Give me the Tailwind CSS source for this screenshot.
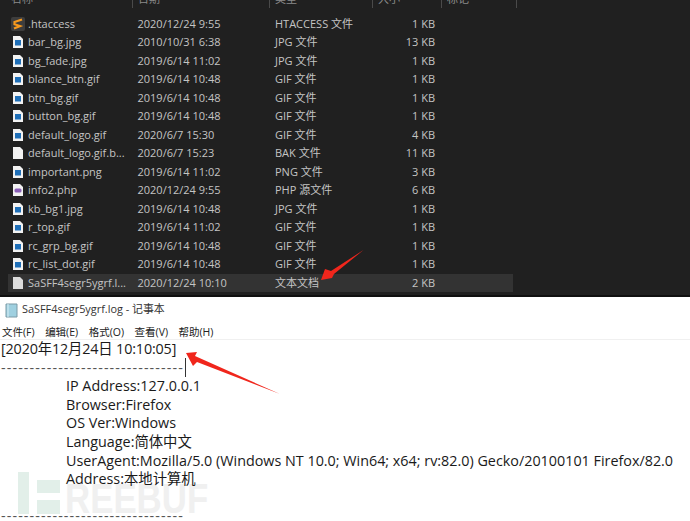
<!DOCTYPE html>
<html lang="zh"><head><meta charset="utf-8"><script src="https://cdn.jsdelivr.net/npm/@tailwindcss/browser@4"></script></head>
<body class="m-0 bg-white">
<div class="relative w-[690px] h-[521px] overflow-hidden bg-white font-['Open_Sans','Noto_Sans_CJK_SC',sans-serif]">
  <!-- Explorer -->
  <section class="h-[297px] bg-[#202020] border-b-2 border-[#101010] text-[11px] text-[#c4c4c4]">
    <div class="h-[8px] relative overflow-hidden text-[#8a8a8a] flex">
      <div class="w-[133px] pl-[11px] -mt-[9px] border-r border-[#4a4a4a]">名称</div>
      <div class="w-[137px] pl-[5px] -mt-[9px] border-r border-[#4a4a4a]">日期</div>
      <div class="w-[103px] pl-[5px] -mt-[9px] border-r border-[#4a4a4a]">类型</div>
      <div class="w-[69px] pl-[5px] -mt-[9px] border-r border-[#4a4a4a]">大小</div>
      <div class="w-[75px] pl-[5px] -mt-[9px] border-r border-[#4a4a4a]">标记</div>
    </div>
    <div class="pt-[6.5px] pl-[8px] w-[513px] leading-[18.5px]">
      <div class="flex h-[18.5px] items-center"><span class="w-[20px] flex justify-center"><svg width="14" height="14" viewBox="0 0 14 14"><rect width="14" height="14" rx="2" fill="#3d3d3d"/><path d="M11 2.5 3.5 5v2.2L9 9 3 11.5" fill="none" stroke="#f79a1e" stroke-width="2.2"/></svg></span><span class="w-[109.5px]">.htaccess</span><span class="w-[137.5px]">2020/12/24 9:55</span><span class="w-[100px]">HTACCESS 文件</span><span class="w-[60px] text-right">1 KB</span></div>
      <div class="flex h-[18.5px] items-center"><span class="w-[20px] flex justify-center"><svg width="10" height="12" viewBox="0 0 10 12"><path d="M0 0h7l3 3v9H0z" fill="#f2f2f2"/><rect x="2" y="4" width="6" height="5.5" fill="#1f6fb8"/></svg></span><span class="w-[109.5px]">bar_bg.jpg</span><span class="w-[137.5px]">2010/10/31 6:38</span><span class="w-[100px]">JPG 文件</span><span class="w-[60px] text-right">13 KB</span></div>
      <div class="flex h-[18.5px] items-center"><span class="w-[20px] flex justify-center"><svg width="10" height="12" viewBox="0 0 10 12"><path d="M0 0h7l3 3v9H0z" fill="#f2f2f2"/><rect x="2" y="4" width="6" height="5.5" fill="#1f6fb8"/></svg></span><span class="w-[109.5px]">bg_fade.jpg</span><span class="w-[137.5px]">2019/6/14 11:02</span><span class="w-[100px]">JPG 文件</span><span class="w-[60px] text-right">1 KB</span></div>
      <div class="flex h-[18.5px] items-center"><span class="w-[20px] flex justify-center"><svg width="10" height="12" viewBox="0 0 10 12"><path d="M0 0h7l3 3v9H0z" fill="#f2f2f2"/><rect x="2" y="4" width="6" height="5.5" fill="#1f6fb8"/></svg></span><span class="w-[109.5px]">blance_btn.gif</span><span class="w-[137.5px]">2019/6/14 10:48</span><span class="w-[100px]">GIF 文件</span><span class="w-[60px] text-right">1 KB</span></div>
      <div class="flex h-[18.5px] items-center"><span class="w-[20px] flex justify-center"><svg width="10" height="12" viewBox="0 0 10 12"><path d="M0 0h7l3 3v9H0z" fill="#f2f2f2"/><rect x="2" y="4" width="6" height="5.5" fill="#1f6fb8"/></svg></span><span class="w-[109.5px]">btn_bg.gif</span><span class="w-[137.5px]">2019/6/14 10:48</span><span class="w-[100px]">GIF 文件</span><span class="w-[60px] text-right">1 KB</span></div>
      <div class="flex h-[18.5px] items-center"><span class="w-[20px] flex justify-center"><svg width="10" height="12" viewBox="0 0 10 12"><path d="M0 0h7l3 3v9H0z" fill="#f2f2f2"/><rect x="2" y="4" width="6" height="5.5" fill="#1f6fb8"/></svg></span><span class="w-[109.5px]">button_bg.gif</span><span class="w-[137.5px]">2019/6/14 10:48</span><span class="w-[100px]">GIF 文件</span><span class="w-[60px] text-right">1 KB</span></div>
      <div class="flex h-[18.5px] items-center"><span class="w-[20px] flex justify-center"><svg width="10" height="12" viewBox="0 0 10 12"><path d="M0 0h7l3 3v9H0z" fill="#f2f2f2"/><rect x="2" y="4" width="6" height="5.5" fill="#1f6fb8"/></svg></span><span class="w-[109.5px]">default_logo.gif</span><span class="w-[137.5px]">2020/6/7 15:30</span><span class="w-[100px]">GIF 文件</span><span class="w-[60px] text-right">4 KB</span></div>
      <div class="flex h-[18.5px] items-center"><span class="w-[20px] flex justify-center"><svg width="10" height="12" viewBox="0 0 10 12"><path d="M0 0h7l3 3v9H0z" fill="#f2f2f2"/></svg></span><span class="w-[109.5px]">default_logo.gif.b...</span><span class="w-[137.5px]">2020/6/7 15:23</span><span class="w-[100px]">BAK 文件</span><span class="w-[60px] text-right">11 KB</span></div>
      <div class="flex h-[18.5px] items-center"><span class="w-[20px] flex justify-center"><svg width="10" height="12" viewBox="0 0 10 12"><path d="M0 0h7l3 3v9H0z" fill="#f2f2f2"/><rect x="2" y="4" width="6" height="5.5" fill="#1f6fb8"/></svg></span><span class="w-[109.5px]">important.png</span><span class="w-[137.5px]">2019/6/14 11:02</span><span class="w-[100px]">PNG 文件</span><span class="w-[60px] text-right">3 KB</span></div>
      <div class="flex h-[18.5px] items-center"><span class="w-[20px] flex justify-center"><svg width="10" height="12" viewBox="0 0 10 12"><path d="M0 0h7l3 3v9H0z" fill="#f2f2f2"/><rect x="1.5" y="4.5" width="7" height="4" rx="1.5" fill="#8a5fb8"/></svg></span><span class="w-[109.5px]">info2.php</span><span class="w-[137.5px]">2020/12/24 9:55</span><span class="w-[100px]">PHP 源文件</span><span class="w-[60px] text-right">6 KB</span></div>
      <div class="flex h-[18.5px] items-center"><span class="w-[20px] flex justify-center"><svg width="10" height="12" viewBox="0 0 10 12"><path d="M0 0h7l3 3v9H0z" fill="#f2f2f2"/><rect x="2" y="4" width="6" height="5.5" fill="#1f6fb8"/></svg></span><span class="w-[109.5px]">kb_bg1.jpg</span><span class="w-[137.5px]">2019/6/14 10:48</span><span class="w-[100px]">JPG 文件</span><span class="w-[60px] text-right">1 KB</span></div>
      <div class="flex h-[18.5px] items-center"><span class="w-[20px] flex justify-center"><svg width="10" height="12" viewBox="0 0 10 12"><path d="M0 0h7l3 3v9H0z" fill="#f2f2f2"/><rect x="2" y="4" width="6" height="5.5" fill="#1f6fb8"/></svg></span><span class="w-[109.5px]">r_top.gif</span><span class="w-[137.5px]">2019/6/14 11:02</span><span class="w-[100px]">GIF 文件</span><span class="w-[60px] text-right">1 KB</span></div>
      <div class="flex h-[18.5px] items-center"><span class="w-[20px] flex justify-center"><svg width="10" height="12" viewBox="0 0 10 12"><path d="M0 0h7l3 3v9H0z" fill="#f2f2f2"/><rect x="2" y="4" width="6" height="5.5" fill="#1f6fb8"/></svg></span><span class="w-[109.5px]">rc_grp_bg.gif</span><span class="w-[137.5px]">2019/6/14 10:48</span><span class="w-[100px]">GIF 文件</span><span class="w-[60px] text-right">1 KB</span></div>
      <div class="flex h-[18.5px] items-center"><span class="w-[20px] flex justify-center"><svg width="10" height="12" viewBox="0 0 10 12"><path d="M0 0h7l3 3v9H0z" fill="#f2f2f2"/><rect x="2" y="4" width="6" height="5.5" fill="#1f6fb8"/></svg></span><span class="w-[109.5px]">rc_list_dot.gif</span><span class="w-[137.5px]">2019/6/14 10:48</span><span class="w-[100px]">GIF 文件</span><span class="w-[60px] text-right">1 KB</span></div>
      <div class="flex h-[18.5px] items-center bg-[#333333]"><span class="w-[20px] flex justify-center"><svg width="10" height="12" viewBox="0 0 10 12"><path d="M0 0h7l3 3v9H0z" fill="#dcdcdc"/></svg></span><span class="w-[109.5px]">SaSFF4segr5ygrf.l...</span><span class="w-[137.5px]">2020/12/24 10:10</span><span class="w-[100px]">文本文档</span><span class="w-[60px] text-right">2 KB</span></div>
    </div>
  </section>
  <!-- watermark -->
  <div class="absolute left-[18px] top-[472px] w-[11px] h-[42px] bg-[#e2efe9]"></div>
  <div class="absolute left-[37px] top-[480px] w-[23px] h-[13px] bg-[#e2efe9]"></div>
  <div class="absolute left-[37px] top-[500px] w-[23px] h-[14px] bg-[#e2efe9]"></div>
  <div class="absolute left-[65px] top-[473px] text-[43px] leading-[50px] font-bold text-[#f0f0f0] font-['Liberation_Sans',sans-serif] scale-x-[0.81] origin-left">REEBUF</div>
  <!-- Notepad -->
  <section class="relative text-[#1a1a1a]">
    <div class="h-[27px] flex items-center pl-[5px] gap-[4px] text-[10.9px] text-[#333]"><svg width="13" height="15" viewBox="0 0 13 15"><path d="M1 1h11v13H1z" fill="#9fd0e0" stroke="#7a9aa6"/><path d="M3 1v13" stroke="#d8eef5"/></svg><span class="-translate-y-[1px]">SaSFF4segr5ygrf.log - 记事本</span></div>
    <div class="h-[15px] mt-[1px] flex items-center pl-[2px] gap-[10.5px] text-[10.5px] text-[#222]"><span>文件(F)</span><span>编辑(E)</span><span>格式(O)</span><span>查看(V)</span><span>帮助(H)</span></div>
    <div class="h-[1px] mt-[-1px] bg-[#f0f0f0]"></div>
    <div class="pl-[1px] text-[14.35px] leading-[18.6px] whitespace-nowrap">
      <div class="tracking-[-0.15px]">[2020年12月24日 10:10:05]</div>
      <div class="text-[#555] tracking-[1.1px]">--------------------------------</div>
      <div class="pl-[65px]">IP Address:127.0.0.1</div>
      <div class="pl-[65px]">Browser:Firefox</div>
      <div class="pl-[65px]">OS Ver:Windows</div>
      <div class="pl-[65px]">Language:简体中文</div>
      <div class="pl-[65px]">UserAgent:Mozilla/5.0 (Windows NT 10.0; Win64; x64; rv:82.0) Gecko/20100101 Firefox/82.0</div>
      <div class="pl-[65px]">Address:本地计算机</div>
      <div class="h-[18.6px]"></div>
      <div class="text-[#555] tracking-[1.1px]">--------------------------------</div>
    </div>
  </section>
  <!-- caret -->
  <div class="absolute left-[185px] top-[358px] w-[1px] h-[19px] bg-[#333]"></div>
  <!-- arrows -->
  <svg class="absolute left-0 top-0 pointer-events-none" width="690" height="521" viewBox="0 0 690 521">
    <polygon points="363.5,250 334,274 332,278 321,280 325,269 331,271" fill="#f0261c"/>
    <polygon points="280,394 197,362 193,366 186,353 197,352 195,356" fill="#f0261c"/>
  </svg>
</div>
</body></html>
